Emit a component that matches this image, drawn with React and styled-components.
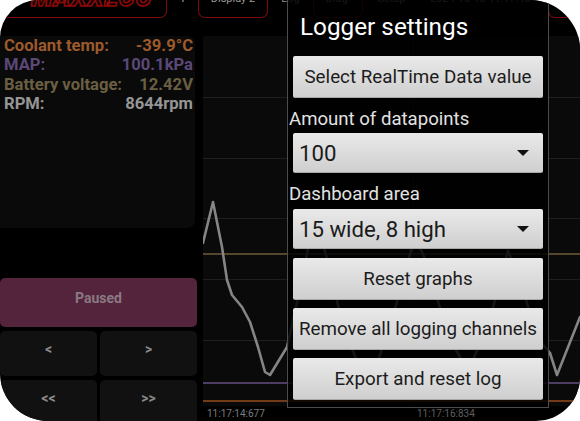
import React from "react";
import styled, { createGlobalStyle } from "styled-components";

const Global = createGlobalStyle`
  html, body { margin: 0; padding: 0; background: #ffffff; }
  * { box-sizing: border-box; }
`;

const Frame = styled.div`
  position: relative;
  width: 580px;
  height: 421px;
  overflow: hidden;
  background: #000;
  border-radius: 38px 50px 44px 48px;
  font-family: Roboto, "Liberation Sans", sans-serif;
`;

const TopBar = styled.div`
  display: flex;
  height: 27px;
  margin-top: -9px;
`;

const Tab = styled.div`
  flex: 0 0 ${(p) => p.$w}px;
  height: 27px;
  display: flex;
  justify-content: ${(p) => (p.$left ? "flex-start" : "center")};
  padding-left: ${(p) => p.$pl || 0}px;
  font-size: 11px;
  line-height: 14px;
  padding-top: 1px;
  color: ${(p) => p.$color || "#8c8c8c"};
  white-space: nowrap;
  overflow: hidden;
  border: ${(p) => (p.$bordered ? "1.5px solid #7a0b0b" : "none")};
  border-top: none;
  border-radius: 0 0 7px 7px;
`;

const LogoText = styled.div`
  margin-top: -9px;
  font-size: 25px;
  line-height: 30px;
  font-weight: 900;
  font-style: italic;
  letter-spacing: 1px;
  color: #160101;
  -webkit-text-stroke: 1.5px #8e0a0a;
`;

const Main = styled.div`
  display: flex;
  margin-top: 18px;
`;

const LeftColumn = styled.div`
  flex: 0 0 197px;
  display: flex;
  flex-direction: column;
`;

const ValuesPanel = styled.div`
  height: 192px;
  margin-right: 2px;
  background: #0a0a0a;
  border-radius: 0 8px 8px 0;
  padding: 0 2px 0 4px;
`;

const ValueRow = styled.div`
  display: flex;
  justify-content: space-between;
  font-size: 16.6px;
  font-weight: 700;
  line-height: 19.3px;
  color: ${(p) => p.$color};
`;

const PausedButton = styled.div`
  margin-top: 50px;
  height: 49px;
  background: #54233c;
  border-radius: 5px;
  display: flex;
  justify-content: center;
  padding-top: 12px;
  font-size: 14px;
  line-height: 16px;
  font-weight: 700;
  color: #8a7a82;
`;

const ButtonGrid = styled.div`
  margin-top: 4px;
  display: grid;
  grid-template-columns: 97px 97px;
  column-gap: 3px;
  row-gap: 4px;
`;

const NavButton = styled.div`
  height: 45px;
  background: #111111;
  border-radius: 5px;
  display: flex;
  justify-content: center;
  padding-top: 10px;
  font-size: 14px;
  line-height: 16px;
  font-weight: 700;
  color: #8a8a8a;
`;

const GraphColumn = styled.div`
  flex: 1;
  margin-left: 6px;
  display: flex;
  flex-direction: column;
`;

const GraphArea = styled.div`
  height: 370px;
  background: #0a0a0a;
  svg { display: block; }
`;

const TimeRow = styled.div`
  height: 15px;
  display: grid;
  grid-template-columns: 210px 1fr;
  font-size: 10px;
  line-height: 15px;
`;

const TimeLabel = styled.div`
  padding-left: 4px;
  color: ${(p) => p.$color};
`;

const Dialog = styled.div`
  position: absolute;
  left: 287px;
  top: -1px;
  width: 262px;
  height: 409px;
  border: 1px solid #4c4c4c;
  background: rgba(0, 0, 0, 0.84);
  display: flex;
  flex-direction: column;
  padding: 0 5px;
`;

const Title = styled.div`
  margin-top: 12px;
  padding-left: 7px;
  font-size: 24.3px;
  line-height: 30px;
  color: #ffffff;
`;

const DialogButton = styled.div`
  margin-top: ${(p) => p.$mt}px;
  height: 42px;
  border-radius: 2px;
  background: linear-gradient(#e9e9e9, #cfcfcf);
  border-bottom: 1px solid #a8a8a8;
  display: flex;
  align-items: center;
  justify-content: center;
  font-size: 18.8px;
  color: #1c1c1c;
  white-space: nowrap;
`;

const Label = styled.div`
  margin-top: 9px;
  margin-left: -4px;
  font-size: 18.6px;
  line-height: 24px;
  color: #e2e2e2;
`;

const Spinner = styled.div`
  margin-top: ${(p) => p.$mt}px;
  height: 40px;
  border-radius: 2px;
  background: linear-gradient(#e9e9e9, #cfcfcf);
  border-bottom: 1px solid #a8a8a8;
  display: flex;
  align-items: center;
  justify-content: space-between;
  padding: 0 14px 0 6px;
  font-size: 22.2px;
  color: #1a1a1a;
`;

const Caret = styled.span`
  width: 0;
  height: 0;
  border-left: 6px solid transparent;
  border-right: 6px solid transparent;
  border-top: 6px solid #111;
`;

const curve =
  "M0,207 L10,166 L19,211 L24,244 L29,259 L39,271 L47,286 L55,311 L62,336 L67,339 L84,311 L100,240 L110,185 L122,215 L140,290 L158,335 L170,340 L190,280 L212,200 L225,230 L245,300 L265,335 L285,290 L305,215 L318,245 L333,300 L347,317 L354,339 L377,281";

const values = [
  { label: "Coolant temp:", value: "-39.9°C", color: "#9c5a2a" },
  { label: "MAP:", value: "100.1kPa", color: "#5b4877" },
  { label: "Battery voltage:", value: "12.42V", color: "#6b5f42" },
  { label: "RPM:", value: "8644rpm", color: "#969696" },
];

export default function App() {
  return (
    <>
      <Global />
      <Frame>
        <TopBar>
          <Tab $w={167} $bordered $left $pl={30}>
            <LogoText>MAXXECU</LogoText>
          </Tab>
          <Tab $w={31} $color="#a8a8a8">1</Tab>
          <Tab $w={70} $bordered $color="#9a9a9a">Display 2</Tab>
          <Tab $w={45} $color="#8a8a8a">Log</Tab>
          <Tab $w={50} $bordered $color="#8a8a8a">Diag.</Tab>
          <Tab $w={57} $color="#8a8a8a">Setup</Tab>
          <Tab $w={128} $left $pl={10} $color="#8a8a8a">2024-10-18 11:17:40</Tab>
          <Tab $w={60} $bordered />
        </TopBar>
        <Main>
          <LeftColumn>
            <ValuesPanel>
              {values.map((v) => (
                <ValueRow key={v.label} $color={v.color}>
                  <span>{v.label}</span>
                  <span>{v.value}</span>
                </ValueRow>
              ))}
            </ValuesPanel>
            <PausedButton>Paused</PausedButton>
            <ButtonGrid>
              <NavButton>&lt;</NavButton>
              <NavButton>&gt;</NavButton>
              <NavButton>&lt;&lt;</NavButton>
              <NavButton>&gt;&gt;</NavButton>
            </ButtonGrid>
          </LeftColumn>
          <GraphColumn>
            <GraphArea>
              <svg width="377" height="370" viewBox="0 0 377 370">
                {[61, 122, 182, 243, 304].map((y) => (
                  <line key={y} x1="0" x2="377" y1={y + 0.5} y2={y + 0.5} stroke="#1f1f1f" strokeWidth="1" />
                ))}
                <line x1="210.5" x2="210.5" y1="0" y2="370" stroke="#1a1a1a" strokeWidth="1" />
                <line x1="0" x2="377" y1="218" y2="218" stroke="#54472e" strokeWidth="2" />
                <line x1="0" x2="377" y1="347" y2="347" stroke="#4e3d62" strokeWidth="2" />
                <line x1="0" x2="377" y1="365" y2="365" stroke="#733a18" strokeWidth="2" />
                <path d={curve} fill="none" stroke="#858585" strokeWidth="2.6" strokeLinejoin="round" strokeLinecap="round" />
              </svg>
            </GraphArea>
            <TimeRow>
              <TimeLabel $color="#7c7c7c">11:17:14:677</TimeLabel>
              <TimeLabel $color="#5e5e5e">11:17:16:834</TimeLabel>
            </TimeRow>
          </GraphColumn>
        </Main>
        <Dialog>
          <Title>Logger settings</Title>
          <DialogButton $mt={14}>Select RealTime Data value</DialogButton>
          <Label>Amount of datapoints</Label>
          <Spinner $mt={2}>
            <span>100</span>
            <Caret />
          </Spinner>
          <Label>Dashboard area</Label>
          <Spinner $mt={3}>
            <span>15 wide, 8 high</span>
            <Caret />
          </Spinner>
          <DialogButton $mt={9}>Reset graphs</DialogButton>
          <DialogButton $mt={8}>Remove all logging channels</DialogButton>
          <DialogButton $mt={8}>Export and reset log</DialogButton>
        </Dialog>
      </Frame>
    </>
  );
}
